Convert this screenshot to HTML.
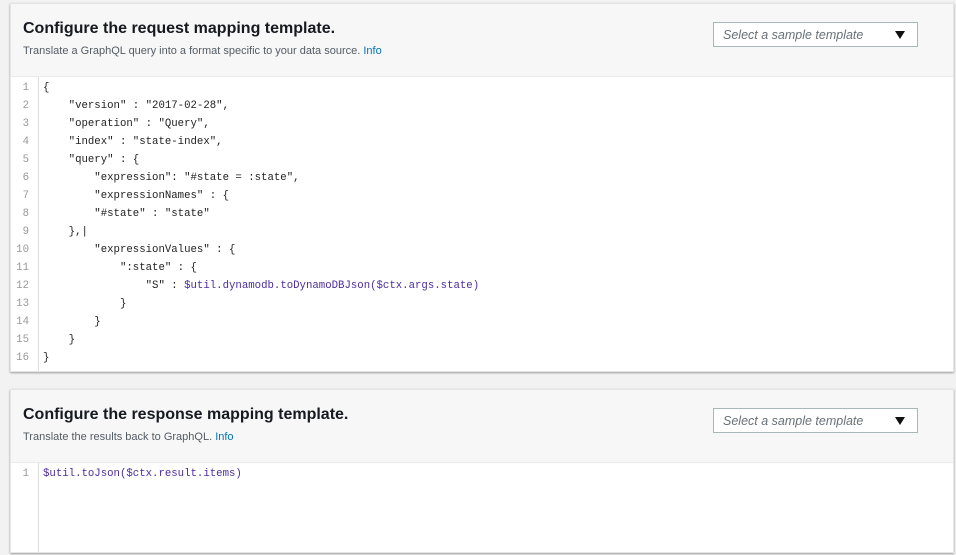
<!DOCTYPE html>
<html><head><style>
body{margin:0;background:#f2f2f2;font-family:"Liberation Sans",sans-serif;width:956px;height:555px;overflow:hidden;position:relative}
.card{position:absolute;left:10px;width:942px;background:#fff;box-shadow:0 1px 2px rgba(0,0,0,.35);border:1px solid #e4e4e4}
.hd{background:#f7f7f7;position:relative;border-bottom:1px solid #eaeaea}
.hd h2{margin:0;position:absolute;left:12px;top:16px;font-size:16px;font-weight:bold;color:#16191f}
.hd p{margin:0;position:absolute;left:12px;top:41px;font-size:11px;color:#545b64}
.hd p span{color:#0073bb}
.sel{position:absolute;left:702px;width:205px;height:25px;border:1px solid #aab7b8;background:#fff;box-sizing:border-box}
.sel i{position:absolute;left:9px;top:5px;font-size:12.5px;color:#687078;font-style:italic}
.sel b{position:absolute;right:12px;top:8px;width:0;height:0;border-left:5px solid transparent;border-right:5px solid transparent;border-top:8px solid #111}
.code{position:relative;font-family:"Liberation Mono",monospace;font-size:10.7px;color:#222}
.gut{position:absolute;left:0;top:0;bottom:0;width:27px;border-right:1px solid #ddd;background:#fff}
.ln{position:absolute;left:0;width:18px;text-align:right;color:#999}
.tx{position:absolute;left:32px;white-space:pre}
.v{color:#4b2c9e}
</style></head><body>
<div class="card" style="top:3px;height:367px">
 <div class="hd" style="height:72px">
  <h2>Configure the request mapping template.</h2>
  <p>Translate a GraphQL query into a format specific to your data source. <span>Info</span></p>
  <div class="sel" style="top:18px"><i>Select a sample template</i><b></b></div>
 </div>
 <div class="code" style="height:294px">
  <div class="gut"></div>
  <div class="ln" style="top:5px">1</div><div class="tx" style="top:5px">{</div>
  <div class="ln" style="top:23px">2</div><div class="tx" style="top:23px">    "version" : "2017-02-28",</div>
  <div class="ln" style="top:41px">3</div><div class="tx" style="top:41px">    "operation" : "Query",</div>
  <div class="ln" style="top:59px">4</div><div class="tx" style="top:59px">    "index" : "state-index",</div>
  <div class="ln" style="top:77px">5</div><div class="tx" style="top:77px">    "query" : {</div>
  <div class="ln" style="top:95px">6</div><div class="tx" style="top:95px">        "expression": "#state = :state",</div>
  <div class="ln" style="top:113px">7</div><div class="tx" style="top:113px">        "expressionNames" : {</div>
  <div class="ln" style="top:131px">8</div><div class="tx" style="top:131px">        "#state" : "state"</div>
  <div class="ln" style="top:149px">9</div><div class="tx" style="top:149px">    },|</div>
  <div class="ln" style="top:167px">10</div><div class="tx" style="top:167px">        "expressionValues" : {</div>
  <div class="ln" style="top:185px">11</div><div class="tx" style="top:185px">            ":state" : {</div>
  <div class="ln" style="top:203px">12</div><div class="tx" style="top:203px">                "S" : <span class="v">$util.dynamodb.toDynamoDBJson($ctx.args.state)</span></div>
  <div class="ln" style="top:221px">13</div><div class="tx" style="top:221px">            }</div>
  <div class="ln" style="top:239px">14</div><div class="tx" style="top:239px">        }</div>
  <div class="ln" style="top:257px">15</div><div class="tx" style="top:257px">    }</div>
  <div class="ln" style="top:275px">16</div><div class="tx" style="top:275px">}</div>
 </div>
</div>
<div class="card" style="top:389px;height:162px">
 <div class="hd" style="height:72px">
  <h2>Configure the response mapping template.</h2>
  <p>Translate the results back to GraphQL. <span>Info</span></p>
  <div class="sel" style="top:18px"><i>Select a sample template</i><b></b></div>
 </div>
 <div class="code" style="height:89px">
  <div class="gut"></div>
  <div class="ln" style="top:5px">1</div><div class="tx v" style="top:5px">$util.toJson($ctx.result.items)</div>
 </div>
</div>
</body></html>
